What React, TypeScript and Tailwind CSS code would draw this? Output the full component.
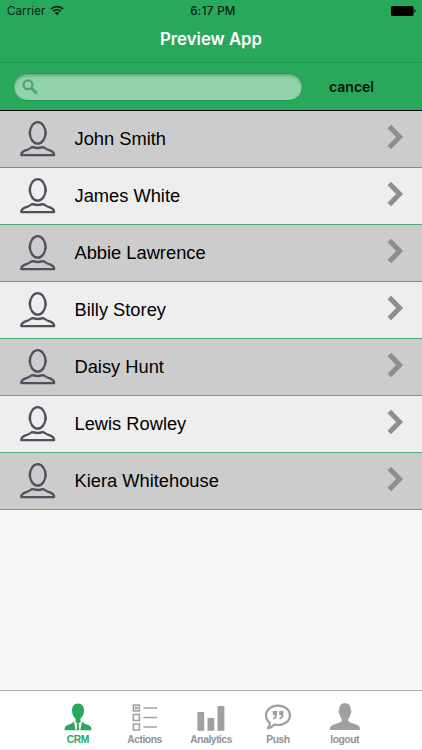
import React from "react";

const contacts = [
  "John Smith",
  "James White",
  "Abbie Lawrence",
  "Billy Storey",
  "Daisy Hunt",
  "Lewis Rowley",
  "Kiera Whitehouse",
];

function PersonOutline() {
  return (
    <svg width="36" height="36" viewBox="0 0 36 36" fill="none" stroke="#50505e" strokeWidth="2.3" strokeLinejoin="round" className="mb-px shrink-0">
      <ellipse cx="17.7" cy="11.9" rx="7.8" ry="10.7" />
      <path d="M9.5 10.5V14M25.9 10.5V14" strokeWidth="1.6" />
      <path d="M1.3 34.2C1 31 3.2 30 7 28.9C9.6 28.2 11.2 25.8 13 26.2C16 27.2 19.4 27.2 22.4 26.2C24.2 25.8 25.8 28.2 28.4 28.9C32.2 30 34.4 31 34.1 34.2Z" />
    </svg>
  );
}

function ContactRow({ name, shaded }: { name: string; shaded: boolean }) {
  return (
    <li className={`flex h-[57px] items-center border-b border-[#4cac78] pl-5 pr-[18px] ${shaded ? "bg-[#cccccc]" : "bg-[#eeeeee]"}`}>
      <PersonOutline />
      <span className="ml-[18.5px] flex-1 text-[18.3px] leading-6 text-black">{name}</span>
      <svg width="17" height="26" viewBox="0 0 17 26" fill="none" stroke="#8e8e8e" strokeWidth="5" className="mb-[4px]">
        <path d="M2.3 2.4L12.6 13L2.3 23.6" />
      </svg>
    </li>
  );
}

const icons: Record<string, React.ReactNode> = {
  CRM: (
    <svg width="28" height="28" viewBox="0 0 28 28" fill="#28a85b">
      <path d="M14 .5C10 .5 7.9 3.4 8 7.6C8.1 11.4 9.7 14.2 11.6 16V19L14 20.5L16.4 19V16C18.3 14.2 19.9 11.4 20 7.6C20.1 3.4 18 .5 14 .5Z" />
      <path d="M10.3 18.2L12.4 27.2H.6C.6 23.8 1.5 22.8 5 21.5C7.1 20.7 8.8 19.8 10.3 18.2ZM17.7 18.2L15.6 27.2H27.4C27.4 23.8 26.5 22.8 23 21.5C20.9 20.7 19.2 19.8 17.7 18.2Z" />
      <path d="M10.7 18.4L14 20.4L17.3 18.4L17.8 20.5L16.2 27.2H11.8L10.2 20.5Z" fill="white" />
      <path d="M11.7 17.5H16.3V18.9L14 20.5L11.7 18.9ZM12.7 21L14 20.3L15.3 21L14.7 22.8L15.4 27.2H12.6L13.3 22.8Z" />
    </svg>
  ),
  Actions: (
    <svg width="26" height="28" viewBox="0 0 26 28" fill="none" stroke="#a0a0a0" strokeWidth="1.6">
      <path d="M1.4 2H7.4V8H1.4ZM1.4 11.5H7.4V17.5H1.4ZM1.4 21H7.4V27H1.4ZM11.5 5H25M11.5 14.5H25M11.5 24H25" />
      <path d="M3.2 3.8L5.6 6.2M5.6 3.8L3.2 6.2" />
    </svg>
  ),
  Analytics: (
    <svg width="28" height="28" viewBox="0 0 28 28" fill="#a0a0a0">
      <path d="M.4 9H7.2V27.8H.4ZM10.5 15H17.3V27.8H10.5ZM20.5 3H27.4V27.8H20.5Z" />
    </svg>
  ),
  Push: (
    <svg width="28" height="28" viewBox="0 0 28 28">
      <path d="M14 2.6C20.8 2.6 26 6.9 26 12.2C26 17.7 20.9 22 14 22C12.7 22 11.5 21.8 10.3 21.5C8.7 23.4 6.7 24.9 4 25.3C5.3 23.4 5.8 21.8 5.8 19.7C3.3 17.8 2 15.2 2 12.2C2 6.9 7.2 2.6 14 2.6Z" fill="none" stroke="#a0a0a0" strokeWidth="2.2" strokeLinejoin="round" />
      <path d="M8.8 7.9H13.1V11.4C13.1 14.4 11.6 16.2 9.1 16.5V14.5C10.5 14.2 11.1 13.3 11.1 12.2H8.8ZM15.2 7.9H19.5V11.4C19.5 14.4 18 16.2 15.5 16.5V14.5C16.9 14.2 17.5 13.3 17.5 12.2H15.2Z" fill="#a0a0a0" />
    </svg>
  ),
  logout: (
    <svg width="32" height="28" viewBox="0 0 32 28" fill="#a0a0a0">
      <path d="M16 .3C11.8.3 10 3 10.2 7.2C9.1 7.4 9.6 10.3 10.6 10.9C11 13.3 11.8 14.8 12.9 16V18C11.7 19.6 8.5 20.2 5.5 21.2C2 22.3 1 23.5 1 27H31C31 23.5 30 22.3 26.5 21.2C23.5 20.2 20.3 19.6 19.1 18V16C20.2 14.8 21 13.3 21.4 10.9C22.4 10.3 22.9 7.4 21.8 7.2C22 3 20.2.3 16 .3Z" />
    </svg>
  ),
};

export default function App() {
  return (
    <div className="flex h-[750px] w-[422px] flex-col bg-[#f7f7f7] font-['Liberation_Sans',Arial,sans-serif]">
      <header className="h-[63px] border-b border-[#239551] bg-[#28a85b]">
        <div className="grid h-[22px] grid-cols-3 items-center pl-[7px] pr-[6px] font-['Inter',sans-serif] text-[11.5px] text-[#08200f]">
          <div className="flex items-center gap-[5px] pt-px">
            <span className="tracking-[.1px]">Carrier</span>
            <svg width="14" height="11" viewBox="0 0 14 11" fill="none" stroke="#08200f" strokeWidth="1.7" className="mb-[2px]">
              <path d="M1 4.1C4.2.7 9.8.7 13 4.1M3.2 6.4C5.3 4.2 8.7 4.2 10.8 6.4" />
              <path d="M4.8 7.9C6 6.8 8 6.8 9.2 7.9L7 10.2Z" fill="#08200f" stroke="none" />
            </svg>
          </div>
          <span className="pl-[3px] pt-px text-center font-medium tracking-[.35px]">6:17 PM</span>
          <svg width="25" height="10" viewBox="0 0 25 10" className="justify-self-end">
            <rect width="22.5" height="10" rx="1.5" fill="#000" />
            <path d="M23.3 3.3Q24.6 3.6 24.6 5Q24.6 6.4 23.3 6.7Z" fill="#000" />
          </svg>
        </div>
        <h1 className="pt-[6px] text-center font-['Inter',sans-serif] text-[16.8px] font-semibold leading-[23px] text-white">Preview App</h1>
      </header>
      <div className="flex h-[48px] items-center border-b border-black bg-[#28a85b] pl-[13px]">
        <div className="flex h-[28px] w-[290px] items-center rounded-full border border-[#219350] bg-[#92d3ab] pl-2 shadow-[inset_0_2px_3px_rgba(25,115,61,0.4)]">
          <svg width="16" height="16" viewBox="0 0 16 16" fill="none" stroke="#4fa270" strokeWidth="2.2">
            <circle cx="6" cy="5.8" r="4.4" />
            <path d="M9.2 9L14.7 14.5" strokeWidth="2.7" />
          </svg>
        </div>
        <button className="ml-[26px] font-['Inter',sans-serif] text-[14px] font-semibold leading-5 text-[#041109]">cancel</button>
      </div>
      <ul>
        {contacts.map((name, i) => <ContactRow key={name} name={name} shaded={i % 2 === 0} />)}
      </ul>
      <nav className="mt-auto flex h-[60px] border-b border-t border-b-[#f0f0f0] border-t-[#a9a9a9] bg-white pl-[44.5px] pt-[12px]">
        {Object.entries(icons).map(([name, icon]) => (
          <div key={name} className={`flex w-[66.7px] flex-col items-center text-[10.3px] font-bold leading-[14px] tracking-[-0.45px] ${name === "CRM" ? "text-[#28a85b]" : "text-[#929292]"}`}>
            {icon}
            <span className="mt-[2px]">{name}</span>
          </div>
        ))}
      </nav>
    </div>
  );
}
